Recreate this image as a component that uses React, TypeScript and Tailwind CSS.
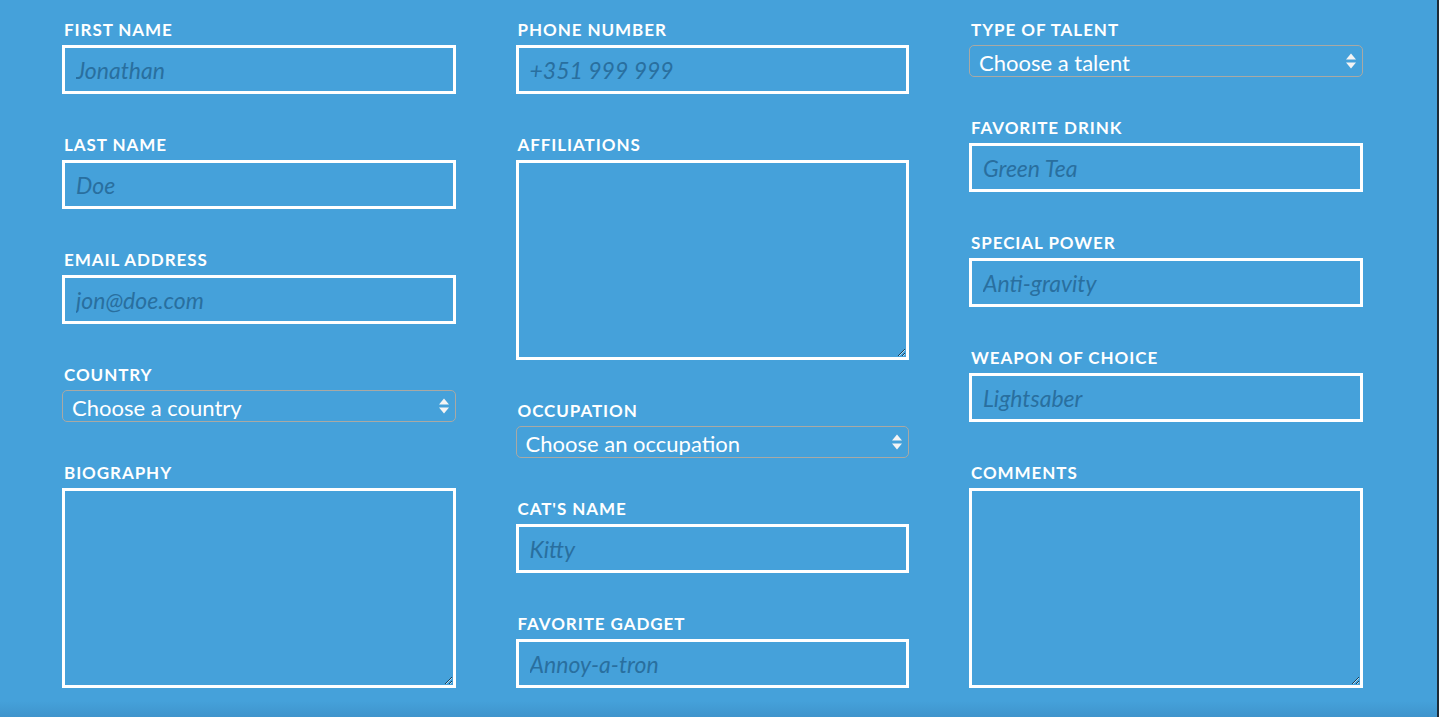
import React from 'react'

type Field =
  | { kind: 'input'; label: string; placeholder: string }
  | { kind: 'select'; label: string; placeholder: string }
  | { kind: 'textarea'; label: string }

const columns: Field[][] = [
  [
    { kind: 'input', label: 'First Name', placeholder: 'Jonathan' },
    { kind: 'input', label: 'Last Name', placeholder: 'Doe' },
    { kind: 'input', label: 'Email Address', placeholder: 'jon@doe.com' },
    { kind: 'select', label: 'Country', placeholder: 'Choose a country' },
    { kind: 'textarea', label: 'Biography' },
  ],
  [
    { kind: 'input', label: 'Phone Number', placeholder: '+351 999 999' },
    { kind: 'textarea', label: 'Affiliations' },
    { kind: 'select', label: 'Occupation', placeholder: 'Choose an occupation' },
    { kind: 'input', label: "Cat's Name", placeholder: 'Kitty' },
    { kind: 'input', label: 'Favorite Gadget', placeholder: 'Annoy-a-tron' },
  ],
  [
    { kind: 'select', label: 'Type of Talent', placeholder: 'Choose a talent' },
    { kind: 'input', label: 'Favorite Drink', placeholder: 'Green Tea' },
    { kind: 'input', label: 'Special Power', placeholder: 'Anti-gravity' },
    { kind: 'input', label: 'Weapon of Choice', placeholder: 'Lightsaber' },
    { kind: 'textarea', label: 'Comments' },
  ],
]

function SelectArrows() {
  return (
    <svg width="12" height="18" viewBox="0 0 12 18" className="absolute right-[6px] top-1/2 -translate-y-1/2 pointer-events-none">
      <path d="M6 1.5 L11 7.5 H1 Z" fill="#f4f4f4" />
      <path d="M6 16.5 L11 10.5 H1 Z" fill="#f4f4f4" />
    </svg>
  )
}

function FormField({ field }: { field: Field }) {
  return (
    <div className="flex flex-col shrink-0">
      {/* Label */}
      <label className="block h-5 leading-5 ml-[2px] mt-[1px] mb-[5px] text-[17px] font-bold uppercase tracking-[0.055em] text-white">
        {field.label}
      </label>

      {field.kind === 'input' && (
        <input
          type="text"
          placeholder={field.placeholder}
          className="h-[49px] w-full bg-transparent border-[3px] border-white px-[11px] text-[23px] italic text-white outline-none placeholder:text-[#296f9f] placeholder:italic"
        />
      )}

      {field.kind === 'textarea' && (
        <textarea className="h-[200px] w-full shrink-0 bg-transparent border-[3px] border-white px-[11px] py-2 text-[20px] text-white outline-none" />
      )}

      {field.kind === 'select' && (
        <div className="relative h-[32px]">
          <select className="h-full w-full appearance-none bg-transparent border border-[#a9a9a4] rounded-[5px] pl-[9px] pr-6 pb-[2px] text-[22px] text-white outline-none">
            <option>{field.placeholder}</option>
          </select>
          <SelectArrows />
        </div>
      )}
    </div>
  )
}

export default function App() {
  return (
    <div className="flex h-[717px] w-full overflow-hidden" style={{ fontFamily: 'Lato, "Open Sans", sans-serif' }}>
      <div className="flex flex-1 flex-col bg-[#45a1da]">
        <div className="flex flex-1 gap-[60px] pl-[62px] pt-[19px]">
          {columns.map((col, i) => (
            <div key={i} className="flex w-[393.5px] flex-col gap-[40px]">
              {col.map((f) => (
                <FormField key={f.label} field={f} />
              ))}
            </div>
          ))}
        </div>
        {/* Bottom shadow edge */}
        <div className="h-[16px] bg-gradient-to-b from-[#45a1da] to-[#3f94cc]" />
      </div>
      <div className="w-[2px] bg-[#1d2b36]" />
    </div>
  )
}
